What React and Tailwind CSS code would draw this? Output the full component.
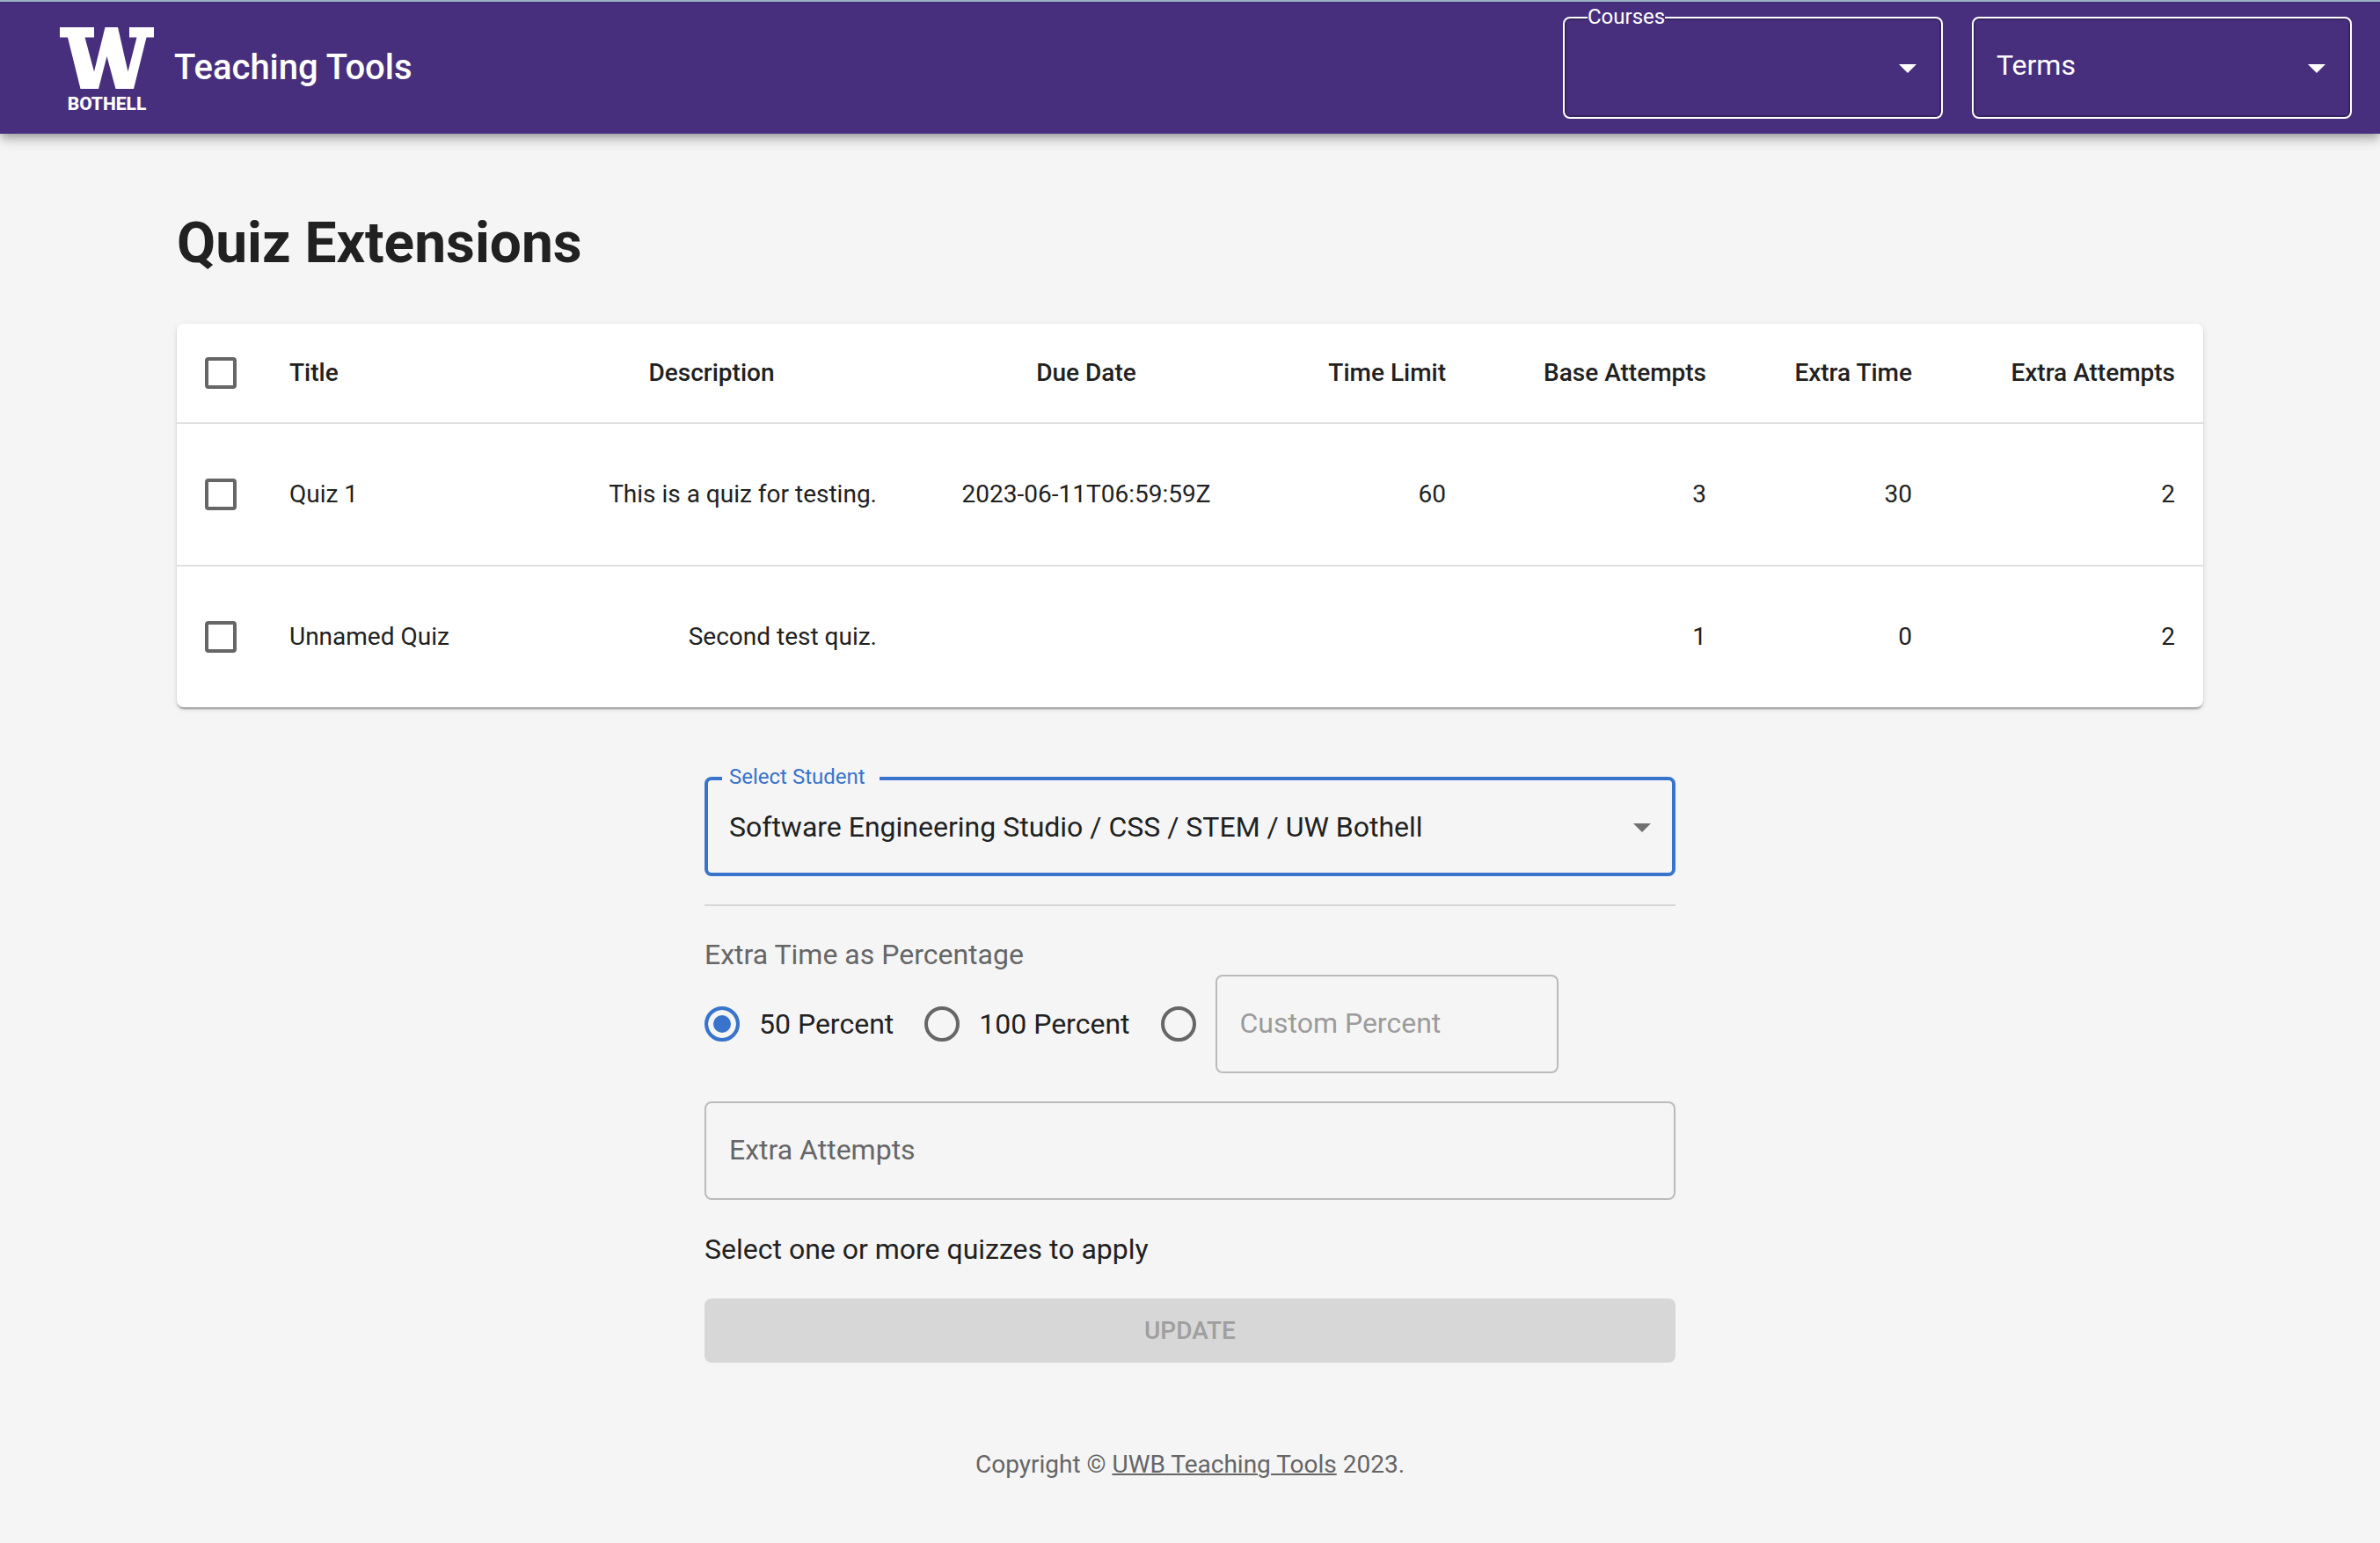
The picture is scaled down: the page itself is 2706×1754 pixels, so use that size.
import React from 'react';

const quizzes = [
  { title: 'Quiz 1', description: 'This is a quiz for testing.', due: '2023-06-11T06:59:59Z', limit: '60', base: '3', extraTime: '30', extraAttempts: '2' },
  { title: 'Unnamed Quiz', description: 'Second test quiz.', due: '', limit: '', base: '1', extraTime: '0', extraAttempts: '2' },
];

function Arrow({ className }) {
  return (
    <svg viewBox="0 0 24 24" aria-hidden="true" className={`pointer-events-none absolute top-1/2 size-12 -translate-y-1/2 fill-current ${className}`}>
      <path d="M7 10l5 5 5-5z" />
    </svg>
  );
}

function Logo() {
  return (
    <div className="flex flex-col items-center gap-1.5 pt-1.5">
      <svg viewBox="0 0 107 70" className="h-[70px] w-[107px] fill-white" aria-hidden="true">
        <path d="M0 0H39V11.500H28.500L39 50.500 51.500 0H66L77.500 50.500 87.500 11.500H79V0H107V11.500H98.500L84 70H63.500L53.500 33 44 70H23.500L9 11.500H0Z" />
      </svg>
      <span className="text-[21px] font-extrabold leading-[22px]">BOTHELL</span>
    </div>
  );
}

function Check({ label }) {
  return (
    <input
      type="checkbox"
      aria-label={label}
      className="mx-auto block size-9 appearance-none rounded-sm border-4 border-[#666] checked:bg-[#3874cb]"
    />
  );
}

function Radio(props) {
  return (
    <input
      type="radio"
      name="percent"
      className="size-10 shrink-0 appearance-none rounded-full border-4 border-[#666] checked:border-[#3874cb] checked:bg-[#3874cb] checked:shadow-[inset_0_0_0_6px_#f5f5f5]"
      {...props}
    />
  );
}

export default function App() {
  return (
    <div className="min-h-screen bg-[#f5f5f5] font-[Roboto,sans-serif] text-[32px] leading-[48px] text-[#212121]">
      <header className="flex items-center justify-between border-t-2 border-[#9bb4c0] bg-[#472f7d] py-[17px] pl-[68px] pr-8 text-white shadow-[0_4px_8px_-2px_rgba(0,0,0,0.2),0_8px_10px_rgba(0,0,0,0.14),0_2px_20px_rgba(0,0,0,0.12)]">
        <div className="flex items-center gap-[23px]">
          <Logo />
          <span className="text-[40px] font-medium">Teaching Tools</span>
        </div>
        <div className="flex gap-[33px]">
          <div className="relative">
            <label htmlFor="courses" className="absolute left-7 top-0 -translate-y-1/2 bg-[#472f7d] text-2xl leading-7">Courses</label>
            <select id="courses" className="block h-[116px] w-[432px] appearance-none rounded-lg border-2 border-white px-7 shadow-[inset_0_0_0_2px_rgba(0,0,0,0.23)]">
              <option></option>
            </select>
            <Arrow className="right-4 text-white" />
          </div>
          <div className="relative">
            <select aria-label="Terms" className="block h-[116px] w-[432px] appearance-none rounded-lg border-2 border-white px-[26px] pb-1.5 shadow-[inset_0_0_0_2px_rgba(0,0,0,0.23)]">
              <option>Terms</option>
            </select>
            <Arrow className="right-4 text-white" />
          </div>
        </div>
      </header>

      <main className="mx-auto max-w-[2400px] px-12 pt-[87px]">
        <h1 className="text-[64px] font-bold leading-[76px]">Quiz Extensions</h1>

        <div className="mt-[53px] overflow-hidden rounded-lg bg-white shadow-[0_4px_2px_-2px_rgba(0,0,0,0.2),0_2px_2px_rgba(0,0,0,0.14),0_2px_6px_rgba(0,0,0,0.12)]">
          <table className="w-full table-fixed text-[28px] leading-10">
            <colgroup>
              <col className="w-[100px]" />
              <col className="w-[288px]" />
              <col className="w-[440px]" />
              <col className="w-[412px]" />
              <col className="w-[235px]" />
              <col className="w-[296px]" />
              <col className="w-[234px]" />
              <col className="w-[299px]" />
            </colgroup>
            <thead>
              <tr className="h-[113px] border-b-2 border-[#e0e0e0] text-right *:font-medium">
                <th><Check label="Select all quizzes" /></th>
                <th className="px-7 text-left">Title</th>
                <th className="px-8 text-center">Description</th>
                <th className="px-8 text-center">Due Date</th>
                <th className="pr-8">Time Limit</th>
                <th className="pr-8">Base Attempts</th>
                <th className="pr-8">Extra Time</th>
                <th className="pr-8">Extra Attempts</th>
              </tr>
            </thead>
            <tbody>
              {quizzes.map((q) => (
                <tr key={q.title} className="h-[162px] border-b-2 border-[#e0e0e0] text-right last:h-[161px] last:border-b-0">
                  <td><Check label={`Select ${q.title}`} /></td>
                  <td className="px-7 text-left">{q.title}</td>
                  <td className="px-8">{q.description}</td>
                  <td className="px-8 text-center">{q.due}</td>
                  <td className="pr-8">{q.limit}</td>
                  <td className="pr-8">{q.base}</td>
                  <td className="pr-8">{q.extraTime}</td>
                  <td className="pr-8">{q.extraAttempts}</td>
                </tr>
              ))}
            </tbody>
          </table>
        </div>

        <form className="mx-auto mt-[79px] flex max-w-[1104px] flex-col gap-8">
          <div className="relative">
            <label htmlFor="student" className="absolute left-5 top-0 -translate-y-1/2 bg-[#f5f5f5] pl-2 pr-4 text-2xl leading-7 text-[#3874cb]">Select Student</label>
            <select id="student" className="block h-[113px] w-full appearance-none rounded-lg border-4 border-[#3874cb] px-6">
              <option>Software Engineering Studio / CSS / STEM / UW Bothell</option>
            </select>
            <Arrow className="right-3.5 text-[#707070]" />
          </div>

          <hr className="border-t-2 border-[#d6d6d6]" />

          <fieldset>
            <legend className="leading-[46px] text-[#666]">Extra Time as Percentage</legend>
            <div className="flex items-center">
              <label className="mr-[35px] flex items-center gap-[22px]"><Radio defaultChecked />50 Percent</label>
              <label className="mr-[35px] flex items-center gap-[22px]"><Radio />100 Percent</label>
              <Radio aria-label="Custom percentage" />
              <input
                type="text"
                aria-label="Custom Percent"
                placeholder="Custom Percent"
                className="ml-[22px] h-28 w-[390px] rounded-lg border-2 border-[#bbb] px-[26px] pb-0.5 placeholder:text-[#9b9b9b]"
              />
            </div>
          </fieldset>

          <input
            type="text"
            aria-label="Extra Attempts"
            placeholder="Extra Attempts"
            className="h-28 w-full rounded-lg border-2 border-[#bbb] px-[26px] pb-0.5 placeholder:text-[#666]"
          />

          <p>Select one or more quizzes to apply</p>

          <button type="button" disabled className="h-[73px] rounded-lg bg-[#d7d7d7] text-[28px] font-medium text-[#9f9f9f]">UPDATE</button>
        </form>
      </main>

      <footer className="pb-16 pt-24 text-center text-[28px] leading-10 text-[#666]">
        Copyright © <a href="#" className="underline decoration-2">UWB Teaching Tools</a> 2023.
      </footer>
    </div>
  );
}
